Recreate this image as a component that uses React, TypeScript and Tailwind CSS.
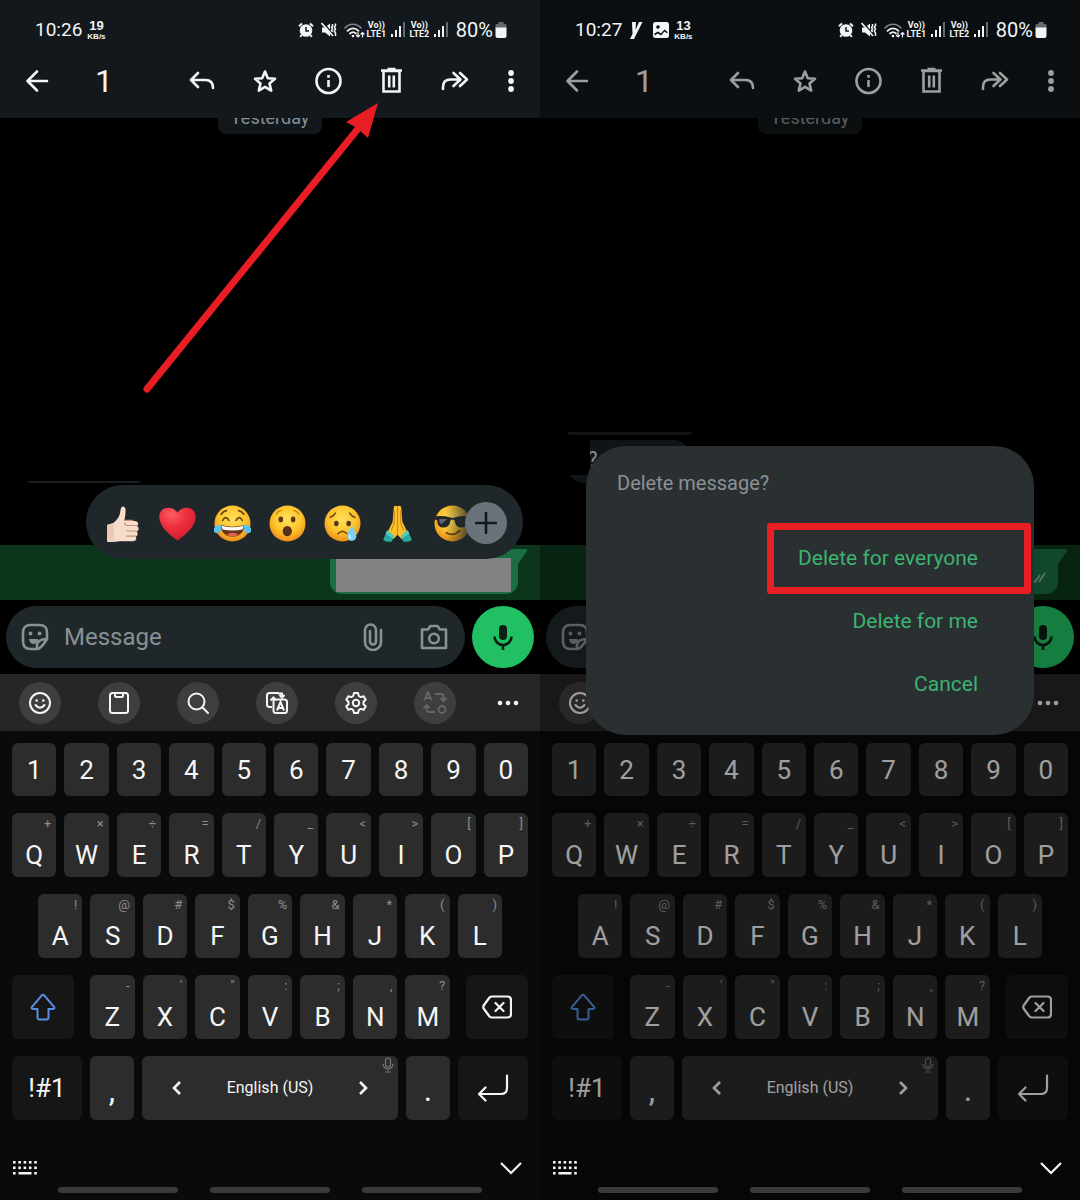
import type { ReactNode } from 'react';

interface KeyData {
    label: string;
    hint: string;
}

interface PhoneProps {
    time: string;
    speed: string;
    notifications?: ReactNode;
    dimmed?: boolean;
    history: ReactNode;
    children?: ReactNode;
}

const digits = ['1', '2', '3', '4', '5', '6', '7', '8', '9', '0'];

const topRow: KeyData[] = [
    { label: 'Q', hint: '+' },
    { label: 'W', hint: '×' },
    { label: 'E', hint: '÷' },
    { label: 'R', hint: '=' },
    { label: 'T', hint: '/' },
    { label: 'Y', hint: '_' },
    { label: 'U', hint: '<' },
    { label: 'I', hint: '>' },
    { label: 'O', hint: '[' },
    { label: 'P', hint: ']' },
];

const homeRow: KeyData[] = [
    { label: 'A', hint: '!' },
    { label: 'S', hint: '@' },
    { label: 'D', hint: '#' },
    { label: 'F', hint: '$' },
    { label: 'G', hint: '%' },
    { label: 'H', hint: '&' },
    { label: 'J', hint: '*' },
    { label: 'K', hint: '(' },
    { label: 'L', hint: ')' },
];

const bottomRow: KeyData[] = [
    { label: 'Z', hint: '-' },
    { label: 'X', hint: "'" },
    { label: 'C', hint: '"' },
    { label: 'V', hint: ':' },
    { label: 'B', hint: ';' },
    { label: 'N', hint: ',' },
    { label: 'M', hint: '?' },
];

/* Status bar */

function SignalBars() {
    return (
        <svg width="15" height="16" viewBox="0 0 15 16" fill="#f2f4f5">
            <rect x="0" y="12" width="2" height="3" />
            <rect x="4" y="8" width="2" height="7" />
            <rect x="8" y="4" width="2" height="11" />
            <rect x="12" y="0" width="2" height="15" fill="#63696d" />
        </svg>
    );
}

function Volte({ line }: { line: string }) {
    return (
        <span className="flex w-[21px] flex-col items-center text-[9px] font-bold leading-[9px]">
            <span>Vo))</span>
            <span>{line}</span>
        </span>
    );
}

function StatusBar({ time, speed, notifications }: { time: string; speed: string; notifications?: ReactNode }) {
    return (
        <div className="relative z-20 flex h-[60px] items-center pl-[35px] pr-[33px] text-[#f2f4f5]">
            <span className="text-[19px]">{time}</span>
            {notifications}
            <span className="ml-[5px] flex flex-col items-center font-['Liberation_Sans'] font-bold">
                <span className="text-[13px] leading-[13px]">{speed}</span>
                <span className="text-[8px] leading-[9px]">KB/s</span>
            </span>
            <div className="ml-auto flex items-center">
                {/* alarm */}
                <svg width="16" height="16" viewBox="0 0 16 16">
                    <circle cx="8" cy="8.5" r="6.3" fill="#f2f4f5" />
                    <path d="M1 4.2 4 1.4M15 4.2 12 1.4M3.6 13l-1.4 1.8M12.4 13l1.400 1.800" stroke="#f2f4f5" strokeWidth="2" />
                    <path d="M8 5v4h3" stroke="#12181c" strokeWidth="1.500" fill="none" />
                </svg>
                {/* muted, vibrating */}
                <svg className="ml-[7px]" width="16" height="16" viewBox="0 0 16 16">
                    <path d="M1 5.500h3L9 1.500v13L4 10.500H1z" fill="#f2f4f5" />
                    <path d="M2 .5 12 12" stroke="#12181c" strokeWidth="1.400" />
                    <path d="M.5 1 12 14" stroke="#f2f4f5" strokeWidth="1.600" />
                    <path d="M11.500 2v2l-1 1.500 1 1.500-1 1.500 1 1.500M14.500 1.500v2l-1.200 1.500 1.200 2-1.200 2 1.200 2v3" stroke="#f2f4f5" strokeWidth="1.500" fill="none" />
                </svg>
                {/* wifi */}
                <svg className="ml-[7px]" width="21" height="17" viewBox="0 0 21 17" fill="none" strokeLinecap="round">
                    <path d="M1 6c4.500-5 11.500-5 16 0" stroke="#81878a" strokeWidth="1.600" />
                    <path d="M3.500 8.800c3.200-3.300 7.800-3.300 11 0M6 11.500c1.800-1.700 4.200-1.700 6 0" stroke="#f2f4f5" strokeWidth="1.800" />
                    <circle cx="9" cy="14" r="1.300" fill="#f2f4f5" />
                    <path d="M14 10.500v4.500M12.500 13.500l1.500 1.500 1.500-1.500M18.500 15v-4.500M17 12l1.500-1.500 1.500 1.500" stroke="#f2f4f5" strokeWidth="1.200" />
                </svg>
                <span className="ml-px flex"><Volte line="LTE1" /></span>
                <span className="ml-1"><SignalBars /></span>
                <span className="ml-[3px] flex"><Volte line="LTE2" /></span>
                <span className="ml-1"><SignalBars /></span>
                <span className="ml-[7px] text-[20px]">80%</span>
                <svg className="ml-0.5" width="12" height="17" viewBox="0 0 12 17">
                    <rect x="3.500" y="0" width="5" height="3" fill="#63696d" />
                    <rect x="0.500" y="2" width="11" height="5" rx="1.500" fill="#63696d" />
                    <path d="M.5 5.500h11V14a2 2 0 0 1-2 2h-7a2 2 0 0 1-2-2z" fill="#f2f4f5" />
                </svg>
            </div>
        </div>
    );
}

/* Selection action bar */

const actions = [
    {
        name: 'Reply',
        icon: <path d="M12 8 5 15l7 7M5 15h14.500q7.500 0 7.500 8" strokeLinecap="round" strokeLinejoin="round" />,
    },
    {
        name: 'Star',
        icon: <path d="m16 6.500 2.800 6.700 7.200.6-5.500 4.700 1.700 7.100L16 21.800l-6.200 3.800 1.700-7.100L6 13.800l7.200-.6z" strokeLinejoin="round" />,
    },
    {
        name: 'Info',
        icon: (
            <>
                <circle cx="16.500" cy="16" r="12" />
                <path d="M16.500 15v7M16.500 10v2.800" />
            </>
        ),
    },
    {
        name: 'Delete',
        icon: <path d="M8.500 6h16v20.500h-16zM6 5.500h21M12.500 4h8M14.200 10.500v12M18.800 10.500v12" />,
    },
    {
        name: 'Forward',
        icon: <path d="M5 24v-2q0-7.500 7.500-7.500H21M15.500 8l7 6.500-7 6.500M22 8l7 6.500-7 6.500" strokeLinecap="round" strokeLinejoin="round" />,
    },
];

function ActionBar() {
    return (
        <div className="flex h-[42px] items-center pl-[21px] pr-[13px] text-[#f2f4f5]">
            <button aria-label="Back" className="h-8 w-8">
                <svg width="32" height="32" viewBox="0 0 32 32" fill="none" stroke="currentColor" strokeWidth="2.600" strokeLinecap="round" strokeLinejoin="round">
                    <path d="M26 16H7M16 6.500 6.500 16l9.500 9.500" />
                </svg>
            </button>
            <span className="ml-[42px] text-[32px] leading-8">1</span>
            <div className="ml-auto flex gap-[31px]">
                {actions.map((action) => (
                    <button key={action.name} aria-label={action.name} className="h-8 w-8">
                        <svg width="32" height="32" viewBox="0 0 32 32" fill="none" stroke="currentColor" strokeWidth="2.600">
                            {action.icon}
                        </svg>
                    </button>
                ))}
            </div>
            <button aria-label="More" className="ml-[25px] h-8 w-8">
                <svg width="32" height="32" viewBox="0 0 32 32" fill="currentColor">
                    <circle cx="16" cy="8" r="2.900" />
                    <circle cx="16" cy="16" r="2.900" />
                    <circle cx="16" cy="24" r="2.900" />
                </svg>
            </button>
        </div>
    );
}

/* Reactions */

function Face({ children }: { children: ReactNode }) {
    return (
        <svg width="37" height="37" viewBox="0 0 36 36" className="shrink-0">
            <defs>
                <radialGradient id="face" cx="50%" cy="38%" r="62%">
                    <stop offset="0" stopColor="#ffe05a" />
                    <stop offset="0.6" stopColor="#fdc42c" />
                    <stop offset="1" stopColor="#ee8d1c" />
                </radialGradient>
            </defs>
            <circle cx="18" cy="18" r="17.500" fill="url(#face)" />
            {children}
        </svg>
    );
}

function ReactionBar() {
    return (
        <div className="absolute bottom-[41px] left-[86px] right-[17px] flex h-[74px] items-center gap-[18px] rounded-full bg-[#1f272b] pl-[18px] pt-0.5">
            {/* thumbs up */}
            <svg width="37" height="37" viewBox="0 0 36 36" className="shrink-0">
                <path d="M3 19.500 9 17.500c4-3 6.500-7 7-12 .3-5.500 5-5 5-.5 0 4-.5 7.500-1.500 10.500H30q3.500.5 3.200 3-.2 1.500-1.200 2 2 .8 1.700 3-.3 2-2 2.300 1.500 1 1 2.800-.5 2-2 2.200 1 1 .6 2.500-.6 2-3.300 2H15q-5 1-12 .5z" fill="#f6dccb" />
                <path d="M3 19.500 8.500 17.700c2 5 2 12 .5 17.300l-6-.2z" fill="#ecc9b5" />
                <path d="M32 20h-9q-3 0-3-2.500M31.500 25.300H22M30.500 30.300H22M20 15h8" stroke="#c99379" strokeWidth="1.100" fill="none" strokeLinecap="round" />
            </svg>
            {/* heart */}
            <svg width="37" height="37" viewBox="0 0 36 36" className="shrink-0">
                <defs>
                    <radialGradient id="heart" cx="35%" cy="20%" r="80%">
                        <stop offset="0" stopColor="#ff5c66" />
                        <stop offset="0.500" stopColor="#ee2f3d" />
                        <stop offset="1" stopColor="#cf1f30" />
                    </radialGradient>
                </defs>
                <path d="M18 34.500C8 27.500.3 20 .3 11.500.3 1.500 13-.5 18 7.500c5-8 17.700-6 17.700 4C35.700 20 28 27.500 18 34.500z" fill="url(#heart)" />
            </svg>
            <Face>
                <path d="M8.500 15q3-5.500 6 0M21.500 15q3-5.500 6 0M7 9q2-3 5-3.500M29 9q-2-3-5-3.500" stroke="#6a4015" strokeWidth="1.600" fill="none" strokeLinecap="round" />
                <path d="M6.500 19.500q11.500 3.500 23 0c0 7-5 11.500-11.500 11.500S6.500 26.500 6.500 19.500z" fill="#6b3417" />
                <path d="M7.300 20.200q10.700 3 21.400 0l-1 3.600q-9.700 2-19.400 0z" fill="#fff" />
                <path d="M12 29q6-4 12 0-6 3.500-12 0z" fill="#e8604e" />
                <path d="M7.500 19C4 19-.5 21-.5 24.500s5.500 4 7 .5q1-2.500 1-6zM28.500 19c3.500 0 8 2 8 5.500s-5.500 4-7 .5q-1-2.500-1-6z" fill="#5cc3ec" />
            </Face>
            <Face>
                <ellipse cx="11.500" cy="14" rx="2.200" ry="2.800" fill="#59351a" />
                <ellipse cx="23.500" cy="14" rx="2.200" ry="2.800" fill="#59351a" />
                <path d="M7 9q2-3.500 5-3.800M29 9q-2-3.500-5-3.800" stroke="#c98416" strokeWidth="1.200" fill="none" strokeLinecap="round" />
                <ellipse cx="17.800" cy="25.500" rx="4.500" ry="5" fill="#59301a" />
            </Face>
            <Face>
                <ellipse cx="12" cy="18" rx="2.200" ry="2.700" fill="#59351a" />
                <ellipse cx="24" cy="18" rx="2.200" ry="2.700" fill="#59351a" />
                <path d="M6 12q3-1 5-4M30 12q-3-1-5-4M13.500 28q4.500-4.500 9 0" stroke="#7d4a18" strokeWidth="1.600" fill="none" strokeLinecap="round" />
                <path d="M27 20.500c3 4.500 4.500 7 4.500 10a4.500 4.500 0 0 1-9 0c0-3 1.500-5.500 4.500-10z" fill="#7ccff2" />
                <path d="M25 29q-1 3 1.500 4" stroke="#e2f6ff" strokeWidth="1.200" fill="none" />
            </Face>
            {/* folded hands */}
            <svg width="37" height="37" viewBox="0 0 36 36" className="shrink-0">
                <path d="M14.500 1.500q2.500-1.500 3.500 0 1-1.500 3.500 0l1.300 15 4.700 9.500-5 7.500L18 29l-4.500 4.500-5-7.500 4.700-9.500z" fill="#fbc22e" />
                <path d="M18 1.500V29M14.800 5v13l-3 7M21.200 5v13l3 7" stroke="#d68413" strokeWidth="1.100" fill="none" />
                <path d="M8 24.500 14.500 30l-2 5.500q-5 1-8.500-1.500zM28 24.500 21.500 30l2 5.500q5 1 8.500-1.500z" fill="#28a8a0" />
                <path d="m8 24.500 6.500 5.500-1 2.500L6.500 28zM28 24.500 21.500 30l1 2.500 7-4.500z" fill="#54c9bd" />
            </svg>
            <Face>
                <path d="M1 11q8-1 14 1 3 1 6 0 6-2 14-1l-.5 3-1.500 1q-.5 7-6 7-6 0-7-7-2-2-4 0-1 7-7 7-5.500 0-6-7L1 14z" fill="#24272b" />
                <path d="M5 13.500h8l-6 5.500q-2-1.500-2-5.500z" fill="#62686f" />
                <path d="M12 27q7 4 13-2" stroke="#6a4015" strokeWidth="1.800" fill="none" strokeLinecap="round" />
            </Face>
            <span className="absolute right-4 h-[42px] w-[62px] rounded-r-full bg-linear-to-r from-transparent to-[#1f272b] to-50%" />
            <button aria-label="More reactions" className="absolute right-4 flex h-[42px] w-[42px] items-center justify-center rounded-full bg-[#6b737a]">
                <svg width="22" height="22" viewBox="0 0 22 22" stroke="#12181c" strokeWidth="2.600" strokeLinecap="round">
                    <path d="M11 1v20M1 11h20" />
                </svg>
            </button>
        </div>
    );
}

/* Message composer */

function Composer() {
    return (
        <div className="flex gap-[7px] bg-black p-1.5">
            <div className="flex h-[62px] min-w-0 flex-1 items-center rounded-full bg-[#1f272a] pl-[15px] pr-[17px] text-[#899195]">
                <button aria-label="Stickers">
                    <svg width="28" height="28" viewBox="0 0 28 28" fill="none" stroke="currentColor" strokeWidth="2.600" strokeLinejoin="round">
                        <path d="M26 16V9.500Q26 2 18.500 2h-9Q2 2 2 9.500v9Q2 26 9.500 26H16q4 0 10-10zM16 26q-1.500-10 10-10" />
                        <path d="M8 16h9v1.500q-1 3.500-4.500 3.500Q9 21 8 16z" fill="currentColor" stroke="none" />
                        <circle cx="9.500" cy="10.500" r="1.900" fill="currentColor" stroke="none" />
                        <circle cx="18.500" cy="10.500" r="1.900" fill="currentColor" stroke="none" />
                    </svg>
                </button>
                <input
                    type="text"
                    aria-label="Message"
                    placeholder="Message"
                    className="ml-[15px] min-w-0 flex-1 bg-transparent text-[24px] outline-none placeholder:text-[#899195]"
                />
                <button aria-label="Attach">
                    <svg width="20" height="28" viewBox="0 0 20 28" fill="none" stroke="currentColor" strokeWidth="2.600" strokeLinecap="round">
                        <path d="M18 7v12a8 8 0 0 1-16 0V7a5.500 5.500 0 0 1 11 0v11.500a3 3 0 0 1-6 0V8" />
                    </svg>
                </button>
                <button aria-label="Camera" className="ml-[37px]">
                    <svg width="28" height="28" viewBox="0 0 28 28" fill="none" stroke="currentColor" strokeWidth="2.600" strokeLinejoin="round">
                        <path d="M2 6.500h6L10.500 3h7L20 6.500h6V25H2z" />
                        <circle cx="14" cy="15.500" r="4.800" />
                    </svg>
                </button>
            </div>
            <button aria-label="Voice message" className="flex h-[62px] w-[62px] items-center justify-center rounded-full bg-[#21c063]">
                <svg width="20" height="26" viewBox="0 0 20 26" fill="none" stroke="#0b1f14" strokeWidth="2.600">
                    <rect x="6" y="1" width="8" height="15" rx="4" fill="#0b1f14" stroke="none" />
                    <path d="M1.500 12.500a8.500 8.500 0 0 0 17 0M10 21v5" />
                </svg>
            </button>
        </div>
    );
}

/* Keyboard */

const tools = [
    {
        name: 'Emoji',
        icon: (
            <>
                <circle cx="12" cy="12" r="10" />
                <path d="M7.500 14q4.500 5.500 9 0" strokeLinecap="round" />
                <circle cx="8.700" cy="9.500" r="1.300" fill="currentColor" stroke="none" />
                <circle cx="15.300" cy="9.500" r="1.300" fill="currentColor" stroke="none" />
            </>
        ),
    },
    {
        name: 'Clipboard',
        icon: <path d="M5.500 2h13Q21 2 21 4.500v15q0 2.500-2.500 2.500h-13Q3 22 3 19.500v-15Q3 2 5.500 2zM8 2v2.500Q8 6 9.500 6h5Q16 6 16 4.500V2" />,
    },
    {
        name: 'Search',
        icon: (
            <>
                <circle cx="10.500" cy="10.500" r="8" />
                <path d="m16.500 16.500 5.500 5.500" strokeLinecap="round" />
            </>
        ),
    },
    {
        name: 'Translate',
        icon: (
            <>
                <path d="M7 16H4.500Q2 16 2 13.500v-9Q2 2 4.500 2h9M9.500 8.500h10q2.500 0 2.500 2.500v8.500q0 2.500-2.500 2.500H11q-2.500 0-2.500-2.500V7M5.500 9.500l3-3 3 3" />
                <path d="M12.500 2.500H17v3.500M14.500 4 17 6.500 19.500 4M12 19.500l3.500-8.500 3.500 8.500M13.500 17h4" />
            </>
        ),
    },
    {
        name: 'Settings',
        icon: (
            <>
                <circle cx="12" cy="12" r="3.200" />
                <path d="M10 2h4l.8 3 1.900 1.100 3-.9 2 3.500-2.200 2.100v2.400l2.200 2.100-2 3.500-3-.9-1.900 1.100-.8 3h-4l-.8-3-1.900-1.100-3 .9-2-3.500 2.200-2.100v-2.400L2.300 8.700l2-3.500 3 .9L9.200 5z" strokeLinejoin="round" />
            </>
        ),
    },
];

function Toolbar() {
    return (
        <div className="flex h-[57px] items-center bg-[#262626] pl-[19px] pr-[21px] text-[#f5f5f5]">
            <div className="flex gap-[37px]">
                {tools.map((tool) => (
                    <button key={tool.name} aria-label={tool.name} className="flex h-[42px] w-[42px] items-center justify-center rounded-full bg-[#3e3e3e]">
                        <svg width="24" height="24" viewBox="0 0 24 24" fill="none" stroke="currentColor" strokeWidth="2">
                            {tool.icon}
                        </svg>
                    </button>
                ))}
                <button aria-label="Text converter" disabled className="flex h-[42px] w-[42px] items-center justify-center rounded-full bg-[#3e3e3e] text-[#666]">
                    <svg width="24" height="24" viewBox="0 0 24 24" fill="none" stroke="currentColor" strokeWidth="1.800">
                        <path d="m1 9.500 3.800-8.500 3.800 8.500M2.500 7h4.600M12 3h6q2.500 0 2.500 2.500V9M17.500 7l3 3 3-3M12 21H6q-2.500 0-2.500-2.500V15M.5 17l3-3 3 3" />
                        <circle cx="19" cy="18.500" r="3.500" />
                    </svg>
                </button>
            </div>
            <button aria-label="More tools" className="ml-auto flex h-[42px] items-center">
                <svg width="22" height="6" viewBox="0 0 22 6" fill="currentColor">
                    <circle cx="3" cy="3" r="2.300" />
                    <circle cx="11" cy="3" r="2.300" />
                    <circle cx="19" cy="3" r="2.300" />
                </svg>
            </button>
        </div>
    );
}

function LetterKey({ label, hint }: KeyData) {
    return (
        <button className="relative h-16 flex-1 rounded-md bg-[#2c2c2c] pt-[19px] text-[26px] leading-[26px]">
            <span className="absolute right-[5px] top-[3px] text-[13px] leading-4 text-[#8f8f8f]">{hint}</span>
            {label}
        </button>
    );
}

function Keyboard() {
    return (
        <div className="flex flex-col gap-[17px] px-3 pt-3 text-[#f5f5f5]">
            <div className="flex gap-2">
                {digits.map((digit) => (
                    <button key={digit} className="h-[53px] flex-1 rounded-md bg-[#2c2c2c] pt-0.5 text-[26px]">{digit}</button>
                ))}
            </div>
            <div className="flex gap-2">
                {topRow.map((item) => <LetterKey key={item.label} {...item} />)}
            </div>
            <div className="flex gap-2 px-[26px]">
                {homeRow.map((item) => <LetterKey key={item.label} {...item} />)}
            </div>
            <div className="flex gap-4">
                <button aria-label="Shift" className="flex h-16 w-[62px] items-center justify-center rounded-md bg-[#161616]">
                    <svg width="28" height="28" viewBox="0 0 28 28" fill="none" stroke="#5590e6" strokeWidth="2" strokeLinejoin="round">
                        <path d="M12.800 2.300q1.200-1.200 2.400 0L25 13.800q1.200 2.200-1 2.200h-4.500v8.500q0 2-2 2h-7q-2 0-2-2V16H4q-2.200 0-1-2.200z" />
                    </svg>
                </button>
                <div className="flex flex-1 gap-2">
                    {bottomRow.map((item) => <LetterKey key={item.label} {...item} />)}
                </div>
                <button aria-label="Backspace" className="flex h-16 w-[62px] items-center justify-center rounded-md bg-[#161616]">
                    <svg width="30" height="24" viewBox="0 0 30 24" fill="none" stroke="currentColor" strokeWidth="2.200" strokeLinejoin="round" strokeLinecap="round">
                        <path d="M10 1.500h15.500Q29 1.500 29 5v14q0 3.500-3.500 3.500H10q-1.500 0-2.500-1L2 14q-1.500-2 0-4l5.500-7.500q1-1 2.500-1zM13.500 8l8 8M21.500 8l-8 8" />
                    </svg>
                </button>
            </div>
            <div className="flex gap-2">
                <button className="h-16 w-[70px] rounded-md bg-[#161616] text-[26px]">!#1</button>
                <button className="h-16 w-11 rounded-md bg-[#2c2c2c] pt-1 text-[32px]">,</button>
                <button className="relative flex h-16 flex-1 items-center justify-between rounded-md bg-[#2c2c2c] px-[30px] text-[16px]">
                    <svg width="9" height="16" viewBox="0 0 9 16" fill="none" stroke="currentColor" strokeWidth="2.600">
                        <path d="M8 2 2 8l6 6" />
                    </svg>
                    English (US)
                    <svg width="9" height="16" viewBox="0 0 9 16" fill="none" stroke="currentColor" strokeWidth="2.600">
                        <path d="m1 2 6 6-6 6" />
                    </svg>
                    <svg className="absolute right-1 top-px" width="12" height="16" viewBox="0 0 12 16" fill="none" stroke="#777" strokeWidth="1.200">
                        <rect x="3.500" y="1" width="5" height="9" rx="2.500" />
                        <path d="M1 7a5 5 0 0 0 10 0M6 12v1.500M3 15h6" />
                    </svg>
                </button>
                <button className="h-16 w-11 rounded-md bg-[#2c2c2c] pt-1 text-[32px]">.</button>
                <button aria-label="Enter" className="flex h-16 w-[70px] items-center justify-center rounded-md bg-[#161616]">
                    <svg width="32" height="28" viewBox="0 0 32 28" fill="none" stroke="currentColor" strokeWidth="2.200" strokeLinecap="round" strokeLinejoin="round">
                        <path d="M30 1.500V14q0 6-6 6H2M8.500 13.500 2 20l6.500 6.500" />
                    </svg>
                </button>
            </div>
        </div>
    );
}

function NavigationBar() {
    return (
        <div className="relative z-20 pb-[7px] pt-9 text-[#f5f5f5]">
            <div className="flex h-6 justify-between pl-[13px] pr-[17px]">
                <button aria-label="Switch keyboard">
                    <svg width="24" height="14" viewBox="0 0 24 14" fill="currentColor">
                        {[0, 5.3, 10.600, 15.900, 21.200].map((x) => (
                            <g key={x}>
                                <rect x={x} y="0" width="2.600" height="2.600" />
                                <rect x={x} y="5.500" width="2.600" height="2.600" />
                            </g>
                        ))}
                        <path d="M0 11h2.600v2.600H0zM5.500 11h13v2.600h-13zM21.200 11h2.600v2.600h-2.600z" />
                    </svg>
                </button>
                <button aria-label="Hide keyboard">
                    <svg width="24" height="14" viewBox="0 0 24 14" fill="none" stroke="currentColor" strokeWidth="2.200">
                        <path d="m2 2 10 10L22 2" />
                    </svg>
                </button>
            </div>
            <div className="mt-[7px] flex justify-center gap-8">
                <span className="h-1.5 w-[120px] rounded-sm bg-[#3a3a3a]" />
                <span className="h-1.5 w-[120px] rounded-sm bg-[#3a3a3a]" />
                <span className="h-1.5 w-[120px] rounded-sm bg-[#3a3a3a]" />
            </div>
        </div>
    );
}

function Phone({ time, speed, notifications, dimmed, history, children }: PhoneProps) {
    return (
        <section className="relative flex min-h-screen min-w-0 flex-1 flex-col bg-[#0a0a0a]">
            <header className="h-[118px] bg-[#12181c]">
                <StatusBar time={time} speed={speed} notifications={notifications} />
                <ActionBar />
            </header>

            <main className="relative flex min-h-[482px] flex-1 flex-col justify-between bg-black">
                <div className="flex h-4 items-end justify-center overflow-hidden">
                    <span className="w-[104px] rounded-lg bg-[#11171a] pb-1 text-center text-[18px] leading-6 text-[#899195]">Yesterday</span>
                </div>
                {history}
                {/* selected message */}
                <div className="flex h-[55px] justify-end bg-[#0b361c] pr-[22px] pt-1">
                    <div className="relative h-[45px] w-[188px] rounded-b-[12px] bg-[#1b6e42]">
                        <svg className="absolute left-full top-0" width="10" height="16" viewBox="0 0 10 16" fill="#1b6e42">
                            <path d="M0 0h7.500q2.500.5 1.200 2.500L0 15z" />
                        </svg>
                        <svg className="absolute bottom-2.5 right-3" width="16" height="14" viewBox="0 0 16 14" fill="none" stroke="#8fb3a0" strokeWidth="1.600">
                            <path d="m1 8 4 4 5-7M9 12l6-9" />
                        </svg>
                        {!dimmed && <span className="absolute bottom-0.5 left-1.5 right-[7px] h-[34px] bg-[#828282]" />}
                    </div>
                </div>
                {!dimmed && <ReactionBar />}
            </main>

            <Composer />
            <Toolbar />
            <Keyboard />
            <NavigationBar />

            {dimmed && <div className="absolute inset-0 z-10 bg-black/35" />}
            {children}
        </section>
    );
}

function DeleteDialog() {
    return (
        <div role="dialog" aria-label="Delete message?" className="absolute inset-x-[46px] bottom-[465px] z-30 flex flex-col rounded-[40px] bg-[#2a2f32] pb-[19px] pt-[25px]">
            <h2 className="px-[31px] text-[20px] leading-6 text-[#8b9094]">Delete message?</h2>
            <div className="mt-8 flex flex-col items-end text-[21px] text-[#3cb371]">
                <button className="relative h-[63px] pl-[31px] pr-14">
                    <span className="absolute -inset-y-1 left-0 right-[3px] rounded-[3px] border-[7px] border-[#e91e25]" />
                    Delete for everyone
                </button>
                <button className="h-[63px] pr-14">Delete for me</button>
                <button className="h-[63px] pr-14">Cancel</button>
            </div>
        </div>
    );
}

export default function App() {
    return (
        <div className="flex min-h-screen bg-black font-[Roboto,'Noto_Sans',sans-serif]">
            <Phone
                time="10:26"
                speed="19"
                history={<span className="absolute bottom-[117px] left-7 h-0.5 w-[112px] rounded-full bg-[#192024]" />}
            >
                <svg className="pointer-events-none absolute left-0 top-0 z-20" width="400" height="400" viewBox="0 0 400 400">
                    <path d="M147 389 357 130" stroke="#e91e25" strokeWidth="7" strokeLinecap="round" />
                    <path d="m378 103-32 19 11 6 11 10z" fill="#e91e25" />
                </svg>
            </Phone>

            <Phone
                time="10:27"
                speed="13"
                dimmed
                notifications={
                    <>
                        <svg className="ml-2" width="13" height="17" viewBox="0 0 13 17" fill="#f2f4f5">
                            <path d="M2 0h4l-.5 8L9 0h3.500L4 17H0l2.500-5z" />
                        </svg>
                        <svg className="ml-2.5" width="16" height="16" viewBox="0 0 16 16">
                            <rect width="16" height="16" rx="2.500" fill="#f2f4f5" />
                            <circle cx="5" cy="5" r="1.800" fill="#0c1013" />
                            <path d="m1.500 11.500 3.500-2 3 2 3.500-4 3 2.500v1.500l-3-2-3.500 4-3-2-3.500 2z" fill="#0c1013" />
                        </svg>
                    </>
                }
                history={
                    <>
                        <span className="absolute bottom-[165px] left-7 h-[3px] w-[124px] rounded-b-full bg-[#192024]" />
                        <div className="absolute bottom-[117px] left-7 h-[43px] w-[122px] rounded-[16px] bg-[#192024] pl-5 pt-1 text-[20px] text-[#d9dcdd]">
                            ?
                            <span className="absolute -left-1.5 top-0 h-[35px] w-7 bg-black" />
                        </div>
                    </>
                }
            >
                <DeleteDialog />
            </Phone>
        </div>
    );
}
